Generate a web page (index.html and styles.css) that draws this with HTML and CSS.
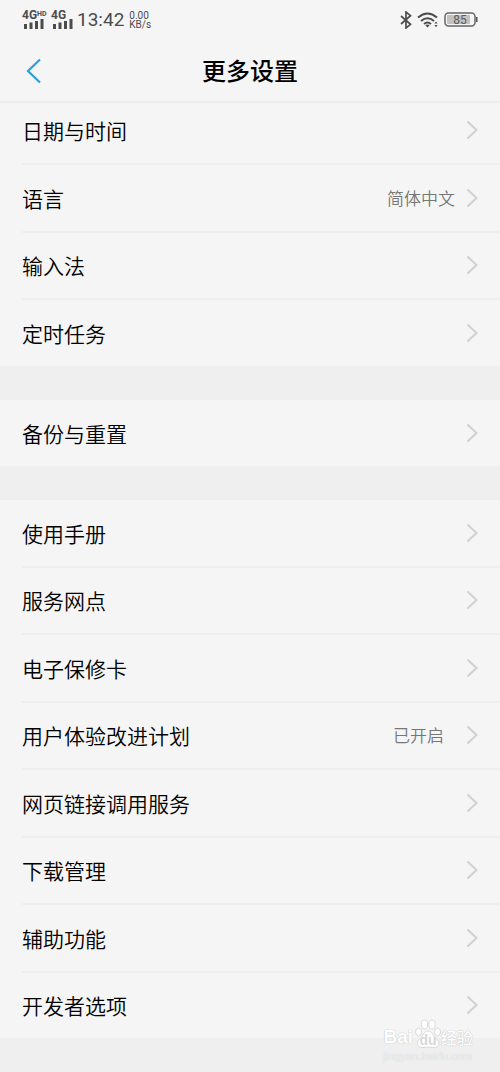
FILE: index.html
```html
<!DOCTYPE html>
<html lang="zh-CN">
<head>
<meta charset="utf-8">
<meta name="viewport" content="width=device-width, initial-scale=1">
<title>更多设置</title>
<link rel="stylesheet" href="styles.css">
</head>
<body>
<svg class="defs" aria-hidden="true">
  <symbol id="chevron" viewBox="0 0 12 20"><path d="M1.500 1.500 10.500 10 1.500 18.500" fill="none" stroke="#d2d2d2" stroke-width="2.200"/></symbol>
  <symbol id="bars" viewBox="0 0 22 10"><path d="M2 5h3v5H2zM7.500 3.500h3V10h-3zM13 2h3v8h-3zM18.500 0h3v10h-3z" fill="#4c4c4c"/></symbol>
</svg>
<header class="top">
  <div class="status">
    <div class="signals">
      <div class="signal"><span class="net">4G<sup class="hd">HD</sup></span><svg class="bars"><use href="#bars"/></svg></div>
      <div class="signal"><span class="net">4G</span><svg class="bars"><use href="#bars"/></svg></div>
      <time class="clock">13:42</time>
      <div class="speed"><span>0.00</span><span>KB/s</span></div>
    </div>
    <div class="indicators">
      <svg class="bluetooth" viewBox="0 0 12 18" aria-label="蓝牙"><path d="M1 5l9.500 8.300L6 17V1l4.500 3.700L1 13" fill="none" stroke="#4c4c4c" stroke-width="1.700"/></svg>
      <svg class="wifi" viewBox="0 0 22 16" aria-label="WLAN"><g fill="none" stroke="#4c4c4c" stroke-width="2"><path d="M1 5.500Q10.500-2.500 20 5.500M4 9Q10.500 3.500 17 9M7 12q3.500-3 7 0"/></g><path d="M8.300 13.200q2.200-1.600 4.400 0L10.500 15.500zM17.500 11.500h3L19 9.500zM17.500 13h3L19 15.300z" fill="#4c4c4c"/></svg>
      <svg class="battery" viewBox="0 0 34 16" aria-label="电量 85%"><rect x="1" y="1" width="30" height="13" rx="3.500" fill="#f5f5f5" stroke="#666" stroke-width="1.500"/><rect x="3" y="3" width="23" height="9" rx="1" fill="#c2c2c2"/><path d="M32 5h1.500v5H32z" fill="#555"/><text class="level" x="16" y="12" text-anchor="middle">85</text></svg>
    </div>
  </div>
  <div class="titlebar">
    <button class="back" type="button" aria-label="返回"><svg class="back-icon" viewBox="0 0 16 26"><path d="M14 1.500 2 13l12 11.500" fill="none" stroke="#2b9fdb" stroke-width="2.200"/></svg></button>
    <h1 class="title">更多设置</h1>
  </div>
</header>
<main class="settings">
  <ul class="group group-first">
    <li class="item"><a class="row" href="#date">日期与时间<svg class="chevron"><use href="#chevron"/></svg></a></li>
    <li class="item"><a class="row" href="#language">语言<span class="value">简体中文</span><svg class="chevron"><use href="#chevron"/></svg></a></li>
    <li class="item"><a class="row" href="#input">输入法<svg class="chevron"><use href="#chevron"/></svg></a></li>
    <li class="item"><a class="row" href="#tasks">定时任务<svg class="chevron"><use href="#chevron"/></svg></a></li>
  </ul>
  <ul class="group">
    <li class="item"><a class="row" href="#backup">备份与重置<svg class="chevron"><use href="#chevron"/></svg></a></li>
  </ul>
  <ul class="group group-long">
    <li class="item"><a class="row" href="#manual">使用手册<svg class="chevron"><use href="#chevron"/></svg></a></li>
    <li class="item"><a class="row" href="#service">服务网点<svg class="chevron"><use href="#chevron"/></svg></a></li>
    <li class="item"><a class="row" href="#warranty">电子保修卡<svg class="chevron"><use href="#chevron"/></svg></a></li>
    <li class="item"><a class="row" href="#experience">用户体验改进计划<span class="value value-wide">已开启</span><svg class="chevron"><use href="#chevron"/></svg></a></li>
    <li class="item"><a class="row" href="#links">网页链接调用服务<svg class="chevron"><use href="#chevron"/></svg></a></li>
    <li class="item"><a class="row" href="#downloads">下载管理<svg class="chevron"><use href="#chevron"/></svg></a></li>
    <li class="item"><a class="row" href="#accessibility">辅助功能<svg class="chevron"><use href="#chevron"/></svg></a></li>
    <li class="item"><a class="row" href="#developer">开发者选项<svg class="chevron"><use href="#chevron"/></svg></a></li>
  </ul>
</main>
<div class="watermark">
  <div class="brand">
    <span>Bai</span>
    <svg class="paw" viewBox="0 0 26 30"><g fill="#fff" stroke="#d8d8d8"><ellipse cx="3.500" cy="13" rx="3" ry="4"/><ellipse cx="9.500" cy="5.500" rx="3.200" ry="4.500"/><ellipse cx="17" cy="5.500" rx="3.200" ry="4.500"/><ellipse cx="22.500" cy="13" rx="3" ry="4"/><path d="M13 12c-4 0-5 5-8 7.500-5 4-2 9 2 9 3 0 4-.5 6-.5s3 .5 6 .5c5 0 7-5 2-9-3-2.500-4-7.500-8-7.500z"/></g><text class="du" x="13" y="26" text-anchor="middle">du</text></svg>
    <span class="brand-cn">经验</span>
  </div>
  <div class="site">jingyan.baidu.com</div>
</div>
</body>
</html>
```
FILE: styles.css
```css
* { box-sizing: border-box; }
body {
  margin: 0;
  min-height: 100vh;
  position: relative;
  background: #efefef;
  color: #000;
  font-family: Roboto, "Noto Sans CJK SC", sans-serif;
}
.defs { display: none; }
.top {
  position: sticky;
  top: 0;
  z-index: 1;
  background: #f5f5f5;
  border-bottom: 2px solid #ececec;
}
.status {
  display: flex;
  justify-content: space-between;
  align-items: center;
  height: 40px;
  padding: 0 22px;
  color: #4c4c4c;
}
.signals, .indicators { display: flex; align-items: center; }
.signal { width: 29px; display: flex; flex-direction: column; }
.net { height: 8px; font-size: 12px; line-height: 8px; font-weight: 700; white-space: nowrap; }
.hd { font-size: 7px; line-height: 7px; vertical-align: top; }
.bars { width: 22px; height: 10px; }
.clock { margin-left: -3px; font-size: 19px; line-height: 24px; }
.speed { display: flex; flex-direction: column; margin-left: 5px; font-size: 10px; line-height: 9px; }
.indicators { gap: 5px; }
.bluetooth { width: 12px; height: 18px; }
.wifi { width: 22px; height: 16px; }
.battery { width: 34px; height: 16px; }
.level { font-size: 12px; fill: #5c5c5c; }
.titlebar {
  display: grid;
  grid-template-columns: 64px 1fr 64px;
  align-items: center;
  height: 61px;
}
.back { height: 48px; padding: 0 0 0 26px; border: 0; background: none; display: flex; align-items: center; }
.back-icon { width: 16px; height: 26px; }
.title { margin: 0; padding-top: 2px; text-align: center; font-size: 24px; line-height: 32px; font-weight: 500; }
.settings { display: flex; flex-direction: column; gap: 34px; padding-bottom: 34px; }
.group {
  display: flex;
  flex-direction: column;
  min-height: 66px;
  margin: 0;
  padding: 0;
  list-style: none;
  background: #f5f5f5;
}
/* The first group is scrolled slightly beneath the header. */
.group-first { min-height: 269px; margin-top: -6px; }
.group-long { min-height: 538px; }
.item { flex: 1; display: flex; margin-left: 22px; }
.item + .item { border-top: 2px solid #eee; }
.row {
  flex: 1;
  display: flex;
  align-items: center;
  padding: 0 22px 0 0;
  color: inherit;
  font-family: "Noto Sans CJK SC DemiLight", "Noto Sans CJK SC", sans-serif;
  font-size: 21px;
  line-height: 32px;
  font-weight: 350;
  text-decoration: none;
}
.chevron { width: 12px; height: 20px; margin-left: auto; }
.value { margin-left: auto; font-size: 17px; line-height: 24px; color: #777; }
.value + .chevron { margin-left: 11px; }
.value-wide + .chevron { margin-left: 22px; }
.watermark {
  position: absolute;
  right: 27px;
  bottom: 9px;
  z-index: 2;
  color: #fff;
  text-shadow: 0 0 1px #bbb, 0 0 1px #ccc;
}
.brand { display: flex; align-items: flex-end; font: 700 19px/24px "Liberation Sans", sans-serif; }
.paw { width: 26px; height: 30px; margin-left: 2px; }
.du { font-size: 14px; fill: #d8d8d8; text-shadow: none; }
.brand-cn { font: 500 16px/24px "Noto Sans CJK SC", sans-serif; }
.site { font: 11px/14px "Liberation Sans", sans-serif; color: #efefef; text-shadow: 0 0 1px #ccc; }
```
